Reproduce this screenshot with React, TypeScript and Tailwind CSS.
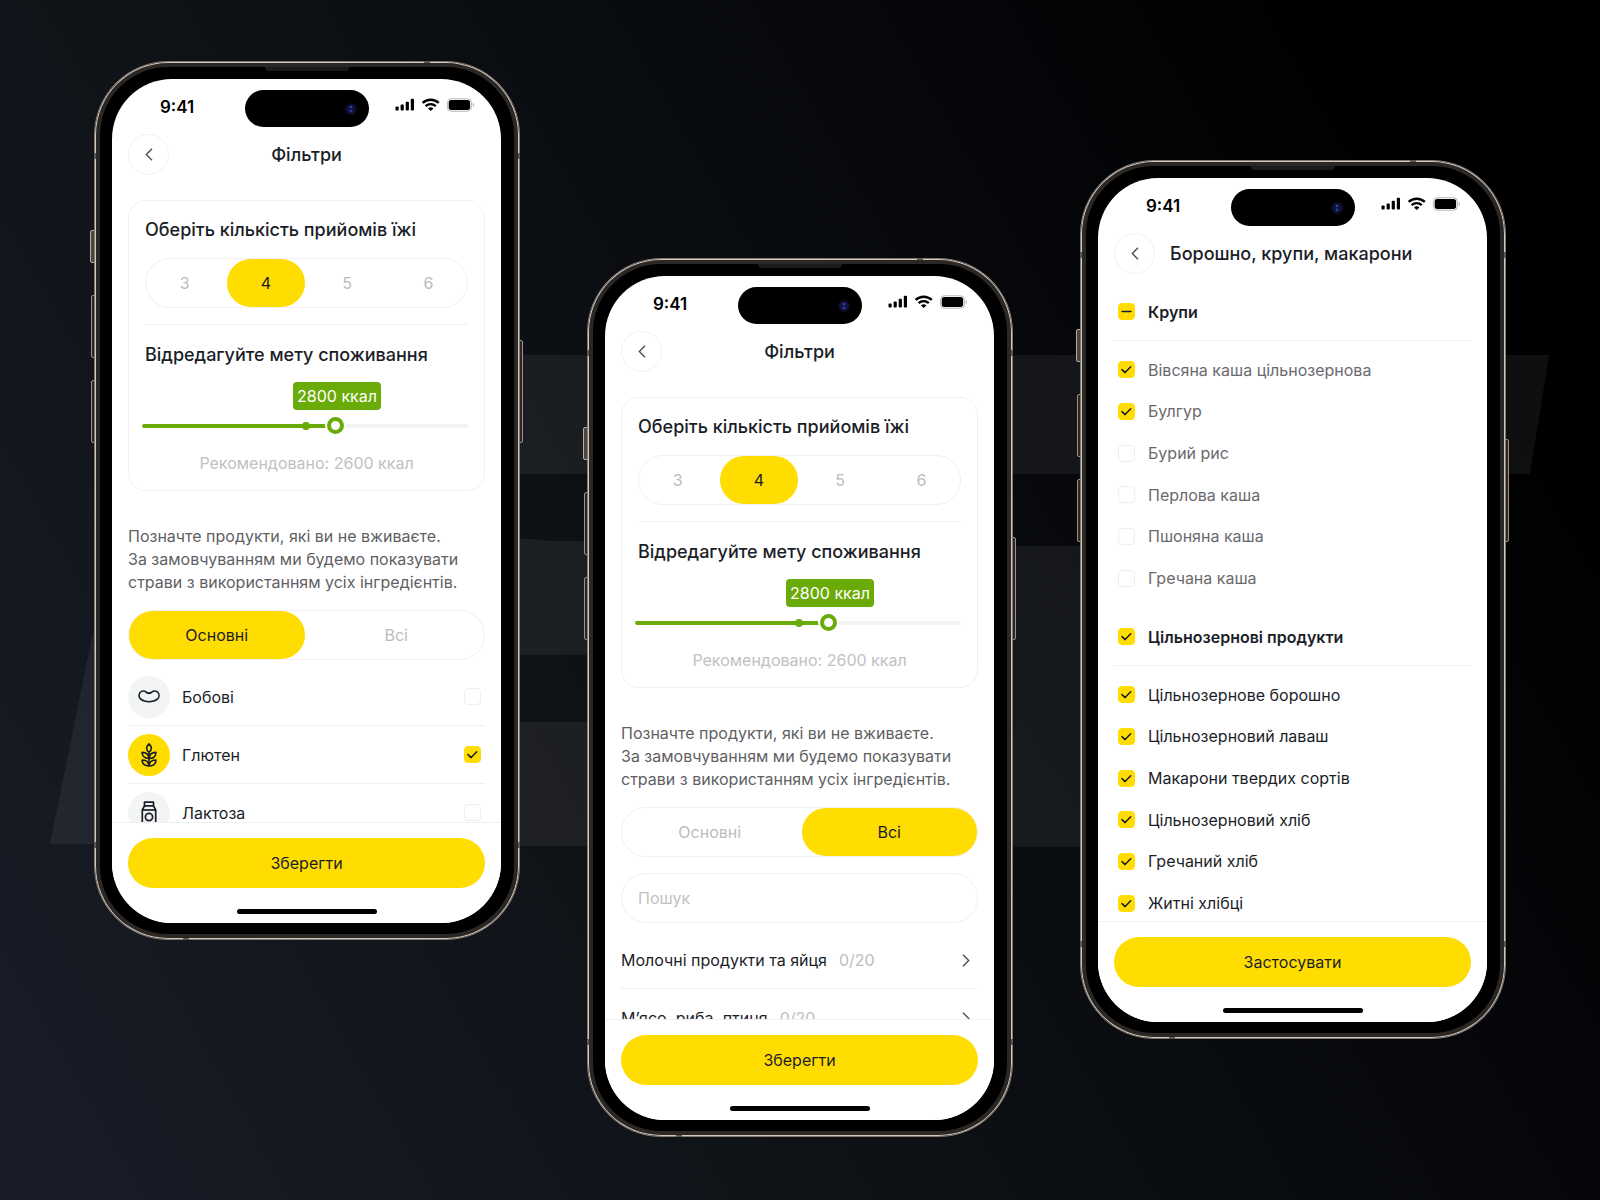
import { useEffect, useId, useRef } from "react";
import type { ReactNode } from "react";

function StatusBar() {
  return (
    <div className="relative h-[55px] shrink-0">
      <div className="flex h-[54px] items-center justify-between pt-[2px] pr-[26px] pl-12">
        <span className="text-[17px] leading-5 font-semibold text-black">9:41</span>
        <svg className="mb-1" width="80" height="14" viewBox="0 0 80 14" aria-hidden="true">
          <g fill="#000">
            <rect x="0.5" y="8.5" width="3.2" height="4" rx="0.9" />
            <rect x="5.6" y="6.5" width="3.2" height="6" rx="0.9" />
            <rect x="10.7" y="3.8" width="3.2" height="8.7" rx="0.9" />
            <rect x="15.8" y="0.8" width="3.2" height="11.7" rx="0.9" />
          </g>
          <g fill="none" stroke="#000" strokeWidth="2.4">
            <path d="M27.6 4.9C32.2 0.6 39.2 0.6 43.8 4.9" />
            <path d="M30.6 8.1C33.5 5.4 37.9 5.4 40.8 8.1" />
          </g>
          <path d="M33 10.5Q35.7 8.2 38.4 10.5L35.7 13.1Z" fill="#000" />
          <rect x="52.4" y="0.8" width="24" height="12.4" rx="3.8" fill="none" stroke="#b5b5b5" />
          <path d="M77.7 4.8v4.4c1.8-.8 1.8-3.6 0-4.4z" fill="#b5b5b5" />
          <rect x="53.7" y="2.1" width="21.4" height="9.8" rx="2.6" fill="#000" />
        </svg>
      </div>
      <div className="absolute top-[11px] left-1/2 flex h-[37px] w-[124px] -translate-x-1/2 items-center justify-end rounded-full bg-black pr-[11px]">
        <svg width="14" height="14" viewBox="0 0 14 14" aria-hidden="true">
          <circle cx="7" cy="7" r="6.5" fill="#0a0712" />
          <circle cx="7" cy="7" r="4.8" fill="#10123f" />
          <circle cx="7" cy="5" r="1.3" fill="#3442a8" />
          <circle cx="7" cy="9" r="1.4" fill="#1f3f92" />
        </svg>
      </div>
    </div>
  );
}

function BackButton() {
  return (
    <button
      type="button"
      aria-label="Назад"
      className="flex size-[41px] shrink-0 items-center justify-center rounded-full border border-[#f0f0f0]"
    >
      <svg width="8" height="13" viewBox="0 0 8 13" fill="none" stroke="#4d4d52" strokeWidth="1.4" aria-hidden="true">
        <path d="M7 0.8L1.3 6.5L7 12.2" />
      </svg>
    </button>
  );
}

function Footer({ label }: { label: string }) {
  return (
    <footer className="flex shrink-0 flex-col items-center border-t border-[#f0f0f0] bg-white px-4 pt-[15px] pb-[9px]">
      <button type="button" className="h-[50px] w-full rounded-full bg-[#ffdd00] text-base text-[#1b1e28]">
        {label}
      </button>
      <div className="mt-[21px] h-[5px] w-[140px] rounded-full bg-black" />
    </footer>
  );
}

function Phone({ className, footer, children }: { className: string; footer: string; children: ReactNode }) {
  return (
    <section className={`relative shrink-0 ${className}`}>
      <div className="absolute top-[169px] -left-1 h-[33px] w-[6px] rounded-xs border border-[#b9aea5] bg-[#4b4441]" />
      <div className="absolute top-[234px] -left-[3px] h-[63px] w-[5px] rounded-xs border border-[#9b918a] bg-[#2b2725]" />
      <div className="absolute top-[319px] -left-[3px] h-[63px] w-[5px] rounded-xs border border-[#9b918a] bg-[#2b2725]" />
      <div className="absolute top-[279px] -right-[3px] h-[103px] w-[5px] rounded-xs border border-[#9b918a] bg-[#2b2725]" />
      <div className="relative rounded-[74px] border border-[#817870] bg-[#2a2725] p-[5px] shadow-[inset_0_0_0_1px_#d3c8bd]">
        <div className="rounded-[68px] bg-black pt-3 pr-[13px] pb-[11px] pl-3">
          <div className="flex h-[844px] w-[389px] flex-col overflow-hidden rounded-[60px] bg-white">
            <StatusBar />
            <div className="flex-1 overflow-hidden px-4">{children}</div>
            <Footer label={footer} />
          </div>
        </div>
        <div className="absolute top-[5px] left-1/2 h-1 w-[84px] -translate-x-1/2 rounded-b bg-[#1c1b1b]" />
        <div className="absolute -top-px left-[329px] h-[2px] w-[6px] bg-[#5b5653]" />
        <div className="absolute -bottom-px left-[88px] h-[2px] w-[6px] bg-[#5b5653]" />
        <div className="absolute top-[91px] -left-px h-[6px] w-[2px] bg-[#5b5653]" />
        <div className="absolute top-[91px] -right-px h-[6px] w-[2px] bg-[#5b5653]" />
        <div className="absolute bottom-[91px] -left-px h-[6px] w-[2px] bg-[#5b5653]" />
        <div className="absolute -right-px bottom-[91px] h-[6px] w-[2px] bg-[#5b5653]" />
      </div>
    </section>
  );
}

function Segmented({ options, selected, label }: { options: string[]; selected: string; label: string }) {
  const name = useId();
  return (
    <div role="radiogroup" aria-label={label} className="flex h-[50px] gap-1 rounded-full border border-[#f0f0f0]">
      {options.map((option) => (
        <label
          key={option}
          className="relative flex flex-1 items-center justify-center rounded-full text-base text-[#bcbcbe] has-checked:bg-[#ffdd00] has-checked:text-[#1b1e28]"
        >
          <input type="radio" name={name} value={option} defaultChecked={option === selected} className="sr-only" />
          {option}
        </label>
      ))}
    </div>
  );
}

function Checkbox({ id, checked, mixed }: { id: string; checked?: boolean; mixed?: boolean }) {
  const ref = useRef<HTMLInputElement>(null);
  useEffect(() => {
    if (ref.current) ref.current.indeterminate = Boolean(mixed);
  }, [mixed]);
  return (
    <span className="relative size-[17px] shrink-0">
      <input
        ref={ref}
        id={id}
        type="checkbox"
        defaultChecked={checked}
        className="peer block size-[17px] appearance-none rounded-[4px] border border-[#efefef] bg-white checked:border-[#ffdd00] checked:bg-[#ffdd00] indeterminate:border-[#ffdd00] indeterminate:bg-[#ffdd00]"
      />
      <svg
        className="pointer-events-none absolute inset-0 hidden peer-checked:block peer-indeterminate:block"
        width="17"
        height="17"
        viewBox="0 0 17 17"
        fill="none"
        stroke="#1b1e28"
        strokeWidth="1.5"
        strokeLinecap="round"
        strokeLinejoin="round"
        aria-hidden="true"
      >
        {mixed ? <path d="M4 8.5h9" /> : <path d="M4 8.6L7.1 11.6L12.7 5.8" />}
      </svg>
    </span>
  );
}

function FilterHeader() {
  return (
    <header className="grid grid-cols-[41px_1fr_41px] items-center">
      <BackButton />
      <h1 className="text-center text-lg leading-6 font-medium text-[#1b1e28]">Фільтри</h1>
    </header>
  );
}

function GoalCard() {
  const sliderId = useId();
  return (
    <div className="mt-[25px] rounded-[18px] border border-[#f0f0f0] px-4 pt-[17px] pb-[15px]">
      <h2 className="mb-4 text-lg leading-6 font-medium text-[#1b1e28]">Оберіть кількість прийомів їжі</h2>
      <Segmented options={["3", "4", "5", "6"]} selected="4" label="Кількість прийомів їжі" />
      <hr className="mt-4 mb-[18px] border-[#f0f0f0]" />
      <label htmlFor={sliderId} className="block text-lg leading-6 font-medium text-[#1b1e28]">
        Відредагуйте мету споживання
      </label>
      <div className="mt-[15px] flex justify-end pr-[87px]">
        <output
          htmlFor={sliderId}
          className="flex h-7 w-[88px] items-center justify-center rounded-[4px] bg-[#6aab08] text-base whitespace-nowrap text-white"
        >
          2800 ккал
        </output>
      </div>
      <div className="relative mt-[7px] -ml-[3px] flex h-[17px] items-center">
        <div className="h-1 w-3/5 rounded-l-full bg-[#6aab08]" />
        <div className="h-1 flex-1 rounded-r-full bg-[#f3f3f3]" />
        <div className="absolute left-[160px] size-2 rounded-full bg-[#6aab08]" />
        <input
          id={sliderId}
          type="range"
          min={1000}
          max={4000}
          step={100}
          defaultValue={2800}
          className="absolute inset-0 w-full appearance-none bg-transparent [&::-webkit-slider-thumb]:size-[17px] [&::-webkit-slider-thumb]:appearance-none [&::-webkit-slider-thumb]:rounded-full [&::-webkit-slider-thumb]:border-4 [&::-webkit-slider-thumb]:border-[#6aab08] [&::-webkit-slider-thumb]:bg-white [&::-webkit-slider-thumb]:shadow-[0_0_0_2px_#fff]"
        />
      </div>
      <p className="mt-[17px] text-center text-base text-[#c1c1c3]">Рекомендовано: 2600 ккал</p>
    </div>
  );
}

function FilterIntro({ selected }: { selected: string }) {
  return (
    <>
      <FilterHeader />
      <GoalCard />
      <p className="mt-[34px] mb-4 text-base leading-[23px] whitespace-nowrap text-[#5f5f64]">
        Позначте продукти, які ви не вживаєте.
        <br />
        За замовчуванням ми будемо показувати
        <br />
        страви з використанням усіх інгредієнтів.
      </p>
      <Segmented options={["Основні", "Всі"]} selected={selected} label="Продукти" />
    </>
  );
}

function BeanIcon() {
  return (
    <svg width="22" height="13" viewBox="0 0 22 13" fill="none" stroke="#1b1e28" strokeWidth="1.6" strokeLinejoin="round" aria-hidden="true">
      <path d="M8.3 2.2C9.2 3.3 12.6 3.3 13.7 2.2C15.3 0.6 18.3 0.7 19.9 2.5C21.6 4.5 21.4 7.4 19.3 9.2C15.4 12.5 6.6 12.5 2.8 9.2C0.6 7.4 0.5 4.4 2.1 2.5C3.7 0.7 6.7 0.6 8.3 2.2Z" />
      <path d="M8 2Q11 4.6 14 2" />
    </svg>
  );
}

function WheatIcon() {
  return (
    <svg width="16" height="24" viewBox="0 0 16 24" fill="none" stroke="#1b1e28" strokeWidth="1.6" strokeLinejoin="round" aria-hidden="true">
      <path d="M8 0.9C11.2 4 11.2 6.4 8 9.4C4.8 6.4 4.8 4 8 0.9Z" />
      <path d="M8 9.4V23" />
      <path d="M8 15.4C3.6 15.4 1.1 13.4 1.1 9.4C5.2 9.4 7.7 11.2 8 15.4ZM8 15.4C12.4 15.4 14.9 13.4 14.9 9.4C10.8 9.4 8.3 11.2 8 15.4Z" />
      <path d="M8 23C3.6 23 1.1 20.9 1.1 17C5.2 17 7.7 18.8 8 23ZM8 23C12.4 23 14.9 20.9 14.9 17C10.8 17 8.3 18.8 8 23Z" />
    </svg>
  );
}

function MilkIcon() {
  return (
    <svg width="16" height="24" viewBox="0 0 16 24" fill="none" stroke="#1b1e28" strokeWidth="1.7" strokeLinejoin="round" aria-hidden="true">
      <path d="M3.5 1.2H12.5V4.8H3.5Z" />
      <path d="M3.5 4.8L1.3 9V21.5Q1.3 23 2.8 23H13.2Q14.7 23 14.7 21.5V9L12.5 4.8" />
      <path d="M1.3 9H14.7" />
      <circle cx="8" cy="16" r="3.6" />
    </svg>
  );
}

const allergens = [
  { name: "Бобові", icon: <BeanIcon />, checked: false },
  { name: "Глютен", icon: <WheatIcon />, checked: true },
  { name: "Лактоза", icon: <MilkIcon />, checked: false },
];

function AllergenList() {
  const id = useId();
  return (
    <ul className="mt-2">
      {allergens.map((item, i) => (
        <li key={item.name} className="flex h-[58px] items-center border-b border-[#f0f0f0] pr-1">
          <span
            className={`flex size-[42px] items-center justify-center rounded-full ${item.checked ? "bg-[#ffdd00]" : "bg-[#f3f5f5]"}`}
          >
            {item.icon}
          </span>
          <label htmlFor={`${id}-${i}`} className="flex-1 pl-3 text-base text-[#1b1e28]">
            {item.name}
          </label>
          <Checkbox id={`${id}-${i}`} checked={item.checked} />
        </li>
      ))}
    </ul>
  );
}

const categories = ["Молочні продукти та яйця", "М’ясо, риба, птиця"];

function CategoryList() {
  return (
    <>
      <input
        type="search"
        aria-label="Пошук"
        placeholder="Пошук"
        className="mt-4 h-[50px] w-full rounded-full border border-[#f0f0f0] px-4 text-base text-[#1b1e28] placeholder:text-[#c1c1c3]"
      />
      <ul className="mt-2">
        {categories.map((name) => (
          <li key={name} className="border-b border-[#f0f0f0]">
            <button type="button" className="flex h-[57px] w-full items-center gap-3 pt-px pr-2 text-base text-[#1b1e28]">
              <span>{name}</span>
              <span className="flex-1 text-left text-[#bcbcbe]">0/20</span>
              <svg width="8" height="13" viewBox="0 0 8 13" fill="none" stroke="#4d4d52" strokeWidth="1.4" aria-hidden="true">
                <path d="M1 0.8L6.7 6.5L1 12.2" />
              </svg>
            </button>
          </li>
        ))}
      </ul>
    </>
  );
}

type Group = { title: string; mixed: boolean; tone: string; items: [string, boolean][] };

const groups: Group[] = [
  {
    title: "Крупи",
    mixed: true,
    tone: "text-[#6a6a6e]",
    items: [
      ["Вівсяна каша цільнозернова", true],
      ["Булгур", true],
      ["Бурий рис", false],
      ["Перлова каша", false],
      ["Пшоняна каша", false],
      ["Гречана каша", false],
    ],
  },
  {
    title: "Цільнозернові продукти",
    mixed: false,
    tone: "text-[#1b1e28]",
    items: [
      ["Цільнозернове борошно", true],
      ["Цільнозерновий лаваш", true],
      ["Макарони твердих сортів", true],
      ["Цільнозерновий хліб", true],
      ["Гречаний хліб", true],
      ["Житні хлібці", true],
    ],
  },
];

function GroupList({ group }: { group: Group }) {
  const id = useId();
  return (
    <section className="mt-[9px]">
      <div className="flex h-[58px] items-center gap-[13px] border-b border-[#f0f0f0] pl-1">
        <Checkbox id={id} checked={!group.mixed} mixed={group.mixed} />
        <label htmlFor={id} className="text-base font-semibold text-[#1b1e28]">
          {group.title}
        </label>
      </div>
      <ul className="mt-2 grid h-[250px] grid-rows-6">
        {group.items.map(([name, checked], i) => (
          <li key={name} className="flex items-center gap-[13px] pl-1">
            <Checkbox id={`${id}-${i}`} checked={checked} />
            <label htmlFor={`${id}-${i}`} className={`text-base ${group.tone}`}>
              {name}
            </label>
          </li>
        ))}
      </ul>
    </section>
  );
}

export default function App() {
  return (
    <main className="relative isolate min-h-screen overflow-hidden bg-[linear-gradient(60deg,#191d28_0%,#101318_32%,#07090d_63%,#000_88%)] font-['Inter',sans-serif]">
      <svg
        className="absolute inset-0 -z-10 size-full"
        viewBox="0 0 1600 1200"
        preserveAspectRatio="none"
        fill="#fff"
        fillOpacity="0.06"
        aria-hidden="true"
      >
        <path d="M50 844L94 627H300V844Z" />
        <path d="M300 355H1549L1530 474H300Z" />
        <path d="M300 539H530L550 541H800V655H300Z" />
        <path d="M300 722H800V846H300Z" />
        <path d="M800 546H1200V847H800Z" />
      </svg>
      <div className="flex items-start justify-center gap-[67px]">
        <Phone className="mt-[61px]" footer="Зберегти">
          <FilterIntro selected="Основні" />
          <AllergenList />
        </Phone>
        <Phone className="mt-[258px] mb-[62px]" footer="Зберегти">
          <FilterIntro selected="Всі" />
          <CategoryList />
        </Phone>
        <Phone className="mt-[160px]" footer="Застосувати">
          <header className="flex items-center gap-[15px]">
            <BackButton />
            <h1 className="text-lg leading-6 font-medium text-[#1b1e28]">Борошно, крупи, макарони</h1>
          </header>
          {groups.map((group) => (
            <GroupList key={group.title} group={group} />
          ))}
        </Phone>
      </div>
    </main>
  );
}
